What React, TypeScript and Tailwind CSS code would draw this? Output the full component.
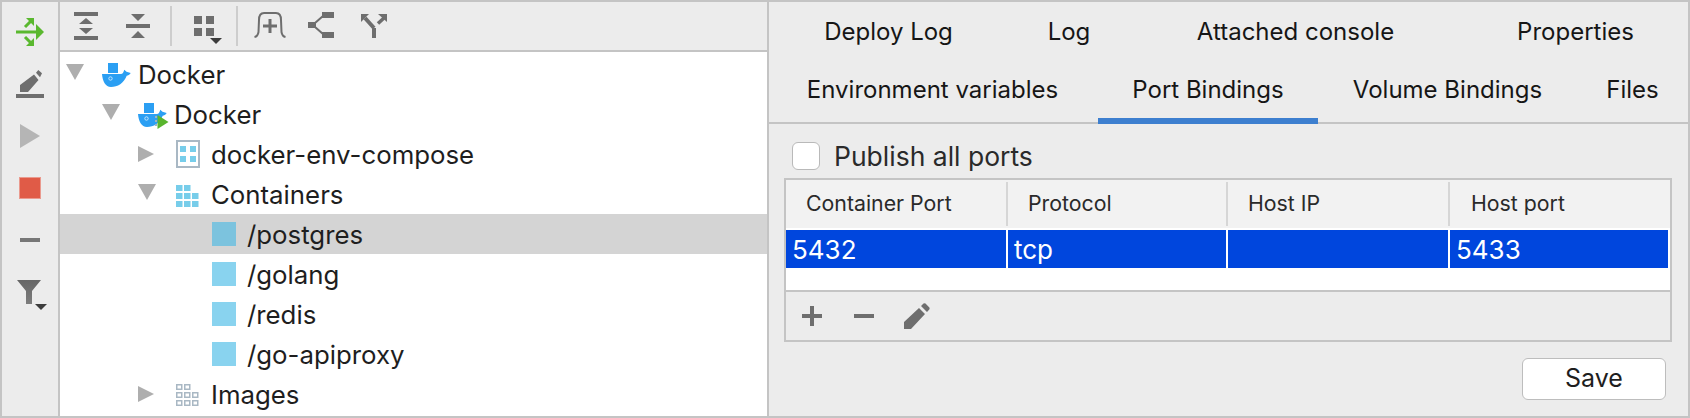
import React from "react";

const gray = "#6e6e6e";

function Whale({ running }: { running?: boolean }) {
  return (
    <svg width="32" height="26" viewBox="0 0 32 26" className="mt-1">
      <rect x="6" y="0" width="10" height="10" fill="#2b9ff3" />
      <path
        d="M0 11 H19 C20.5 11 21.5 9.5 22.3 6.7 L24.5 8.7 L28.7 10 C27.5 11.8 26 12.6 24.7 12.7 C22 20 15.5 24 9 24 C3.5 24 0.5 18 0 11 Z"
        fill="#2b9ff3"
      />
      <circle cx="8.5" cy="15.5" r="1.7" fill="none" stroke="#cfe9fc" strokeWidth="0.9" />
      {running && (
        <>
          <path d="M17 13 h2 v2 h-2 Z M17 17 h2 v2 h-2 Z M17 21 h2 v2 h-2 Z" fill="#9db4c4" />
          <path d="M19.5 12 L30.5 19 L19.5 26 Z" fill="#59b52e" />
        </>
      )}
    </svg>
  );
}

function Arrow({ open }: { open?: boolean }) {
  if (open) {
    return (
      <svg width="18" height="16" viewBox="0 0 18 16" className="-mt-1">
        <path d="M0 0 H18 L9 16 Z" fill="#aeaeae" />
      </svg>
    );
  }
  return (
    <svg width="16" height="16" viewBox="0 0 16 16">
      <path d="M0 0 L16 8 L0 16 Z" fill="#aeaeae" />
    </svg>
  );
}

function ComposeIcon() {
  return (
    <svg width="26" height="28" viewBox="0 0 26 28" className="ml-[2px]">
      <rect x="1" y="1" width="22" height="26" fill="none" stroke="#a9b8c4" strokeWidth="2" />
      <rect x="4" y="6" width="6" height="6" fill="#77cdea" />
      <rect x="14" y="6" width="6" height="6" fill="#77cdea" />
      <rect x="4" y="16" width="6" height="6" fill="#77cdea" />
      <rect x="14" y="16" width="6" height="6" fill="#77cdea" />
    </svg>
  );
}

const gridCells = [
  [0, 0],
  [8, 0],
  [0, 8],
  [8, 8],
  [16, 8],
  [0, 16],
  [8, 16],
  [16, 16],
];

function ContainersIcon() {
  return (
    <svg width="24" height="22" viewBox="0 0 24 22" className="ml-[2px] mt-1">
      {gridCells.map(([x, y]) => (
        <rect key={`${x}-${y}`} x={x} y={y} width="6.5" height="6" fill="#77cdea" />
      ))}
    </svg>
  );
}

function ImagesIcon() {
  return (
    <svg width="24" height="22" viewBox="0 0 24 22" className="ml-[2px] mt-[2px]">
      {gridCells.map(([x, y]) => (
        <rect key={`${x}-${y}`} x={x + 0.75} y={y + 0.75} width="5" height="4.5" fill="none" stroke="#a9b8c4" strokeWidth="1.5" />
      ))}
    </svg>
  );
}

function Square({ selected }: { selected?: boolean }) {
  return <div className={selected ? "w-6 h-6 ml-[2px] bg-[#7cc3de]" : "w-6 h-6 ml-[2px] bg-[#89d3ef]"} />;
}

function TreeRow({
  indent,
  arrow,
  icon,
  label,
  selected,
  slot = "w-[37px]",
}: {
  indent: string;
  arrow?: React.ReactNode;
  icon: React.ReactNode;
  label: string;
  selected?: boolean;
  slot?: string;
}) {
  return (
    <div className={`flex items-center h-10 ${indent} ${selected ? "bg-[#d4d4d4]" : ""}`}>
      <div className="w-9 flex items-center">{arrow}</div>
      <div className={`${slot} flex items-center`}>{icon}</div>
      <span className="text-[25.8px] text-[#1e1e1e] leading-none mt-[2px]">{label}</span>
    </div>
  );
}

function SideToolbar() {
  return (
    <div className="w-[58px] shrink-0 border-r-2 border-[#c4c4c4] pt-1 flex flex-col items-center">
      <div className="h-[52px] flex items-center">
        <svg width="28" height="28" viewBox="0 0 28 28">
          <rect x="0" y="12.5" width="21" height="3" fill="#5ab82f" />
          <path d="M20 6 L28 14 L20 22 Z" fill="#5ab82f" />
          <path d="M10 0 H18 V8 Z M10 28 H18 V20 Z" fill="#5ab82f" />
          <path d="M9 9 L14.5 3.5 M9 19 L14.5 24.5" fill="none" stroke="#5ab82f" strokeWidth="3" />
        </svg>
      </div>
      <div className="h-[52px] flex items-center">
        <svg width="28" height="28" viewBox="0 0 28 28">
          <rect x="0" y="24" width="28" height="4" fill={gray} />
          <path d="M4 22 V15 L18 4.5 L22.5 10 L12 22 Z M20 2.7 L22.3 0 L26 3.3 L24 7.3 Z" fill={gray} />
        </svg>
      </div>
      <div className="h-[52px] flex items-center">
        <svg width="20" height="24" viewBox="0 0 20 24">
          <path d="M0 0 L20 12 L0 24 Z" fill="#b5b5b5" />
        </svg>
      </div>
      <div className="h-[52px] flex items-center">
        <div className="w-[22px] h-[22px] bg-[#e05b47] border border-[#ea9a8e]" />
      </div>
      <div className="h-[52px] flex items-center">
        <div className="w-5 h-1 bg-[#777777]" />
      </div>
      <div className="h-[52px] flex items-start pt-[14px]">
        <svg width="32" height="30" viewBox="0 0 32 30" className="ml-[6px]">
          <defs>
            <linearGradient id="funnel" x1="0" y1="0" x2="0" y2="1">
              <stop offset="0" stopColor="#666666" />
              <stop offset="1" stopColor="#7d7d7d" />
            </linearGradient>
          </defs>
          <path d="M0 0 H24 L15 11 V24 H9 V11 Z" fill="url(#funnel)" />
          <path d="M18 24 H30 L24 30 Z" fill="#3c3c3c" />
        </svg>
      </div>
    </div>
  );
}

function TopToolbar() {
  return (
    <div className="h-[50px] border-b-2 border-[#c4c4c4] flex items-center shrink-0">
      <svg width="24" height="28" viewBox="0 0 24 28" className="ml-[14px]">
        <rect width="24" height="4" fill={gray} />
        <rect y="24" width="24" height="4" fill={gray} />
        <path d="M12 6 L19 12 H5 Z M5 16 H19 L12 22 Z" fill={gray} />
      </svg>
      <svg width="24" height="24" viewBox="0 0 24 24" className="ml-7">
        <rect y="10" width="24" height="4" fill={gray} />
        <path d="M5 0 H19 L12 7 Z M12 17 L19 24 H5 Z" fill={gray} />
      </svg>
      <div className="w-[2px] h-10 bg-[#cdcdcd] ml-5" />
      <svg width="28" height="28" viewBox="0 0 28 28" className="ml-[22px] overflow-visible">
        <rect y="4" width="8" height="8" fill={gray} />
        <rect x="12" y="4" width="8" height="8" fill={gray} />
        <rect y="16" width="8" height="8" fill={gray} />
        <rect x="12" y="16" width="8" height="8" fill={gray} />
        <path d="M16 26 H28 L22 32 Z" fill="#3c3c3c" />
      </svg>
      <div className="w-[2px] h-10 bg-[#cdcdcd] ml-[14px]" />
      <svg width="32" height="28" viewBox="0 0 32 28" className="ml-4">
        <path
          d="M0.5 25 C3 24.5 4 23 4.5 20 L5 8 C5 3 6.5 1 10 1 H22 C25.5 1 27 3 27 8 L27.5 20 C28 23 29 24.5 31.5 25"
          fill="none"
          stroke={gray}
          strokeWidth="2"
        />
        <path d="M9 14 H23 M16 7 V21" stroke={gray} strokeWidth="3" />
      </svg>
      <svg width="26" height="28" viewBox="0 0 26 28" className="ml-[22px]">
        <rect x="14" y="0" width="12" height="6" fill={gray} />
        <rect x="14" y="20" width="12" height="6" fill={gray} />
        <rect x="0" y="10" width="8" height="6" fill={gray} />
        <path d="M7 11 L15 4 M7 15 L15 22" stroke={gray} strokeWidth="2" />
      </svg>
      <svg width="28" height="28" viewBox="0 0 28 28" className="ml-[26px]">
        <rect x="12" y="16" width="4" height="10" fill={gray} />
        <path d="M5 6 L14 16" fill="none" stroke={gray} strokeWidth="4" />
        <path d="M18 11.5 L24 6" fill="none" stroke={gray} strokeWidth="3.5" />
        <path d="M1 2 H9 L1 10 Z M27 2 H18 L27 10 Z" fill={gray} />
      </svg>
    </div>
  );
}

function Tabs() {
  const tab = "flex items-center justify-center h-[56px] text-[24px] text-[#161616] whitespace-nowrap";
  return (
    <div className="shrink-0">
      <div className="flex h-[60px]">
        <div className={`${tab} h-[60px] w-[241px] pr-[2px]`}>Deploy Log</div>
        <div className={`${tab} h-[60px] w-[118px]`}>Log</div>
        <div className={`${tab} h-[60px] w-[335px]`}>Attached console</div>
        <div className={`${tab} h-[60px] w-[225px]`}>Properties</div>
      </div>
      <div className="flex h-[60px] border-b-2 border-[#c4c4c4] box-content items-start">
        <div className={`${tab} w-[329px] pr-[2px]`}>Environment variables</div>
        <div className={`${tab} w-[220px] h-[62px] border-b-[6px] border-[#3d7fcf]`}>Port Bindings</div>
        <div className={`${tab} w-[259px]`}>Volume Bindings</div>
        <div className={`${tab} w-[111px]`}>Files</div>
      </div>
    </div>
  );
}

function PortTable() {
  const head = "h-[48px] flex items-center text-[21.3px] text-[#2a2a2a]";
  const divider = "w-[2px] h-[44px] bg-[#d6d6d6]";
  const cell = "h-[38px] flex items-center pl-[6px] text-[26px] text-white bg-[#0046dd]";
  return (
    <div className="ml-[15px] w-[888px] border-2 border-[#c4c4c4] bg-white">
      <div className="flex items-center h-[48px] bg-[#f2f2f2]">
        <div className={`${head} w-[220px] pl-5`}>Container Port</div>
        <div className={divider} />
        <div className={`${head} w-[218px] pl-5`}>Protocol</div>
        <div className={divider} />
        <div className={`${head} w-[220px] pl-5`}>Host IP</div>
        <div className={divider} />
        <div className={`${head} w-[220px] pl-[21px]`}>Host port</div>
      </div>
      <div className="h-[2px]" />
      <div className="flex h-[38px] gap-[2px]">
        <div className={`${cell} w-[220px]`}>
          <span>5432</span>
        </div>
        <div className={`${cell} w-[218px] pl-[5px]`}>
          <span>tcp</span>
        </div>
        <div className={`${cell} w-[220px]`}></div>
        <div className={`${cell} w-[218px]`}>
          <span>5433</span>
        </div>
      </div>
      <div className="h-[22px]" />
      <div className="h-[50px] border-t-2 border-[#c4c4c4] bg-[#ececec] flex items-center pl-4">
        <svg width="20" height="20" viewBox="0 0 20 20">
          <path d="M0 10 H20 M10 0 V20" stroke={gray} strokeWidth="4" />
        </svg>
        <svg width="20" height="20" viewBox="0 0 20 20" className="ml-8">
          <path d="M0 10 H20" stroke={gray} strokeWidth="4" />
        </svg>
        <svg width="26" height="26" viewBox="0 0 26 26" className="ml-[30px]">
          <path d="M0 26 V19 L15 5 L21 11 L7 26 Z M17 3 L19.5 0.6 Q20.5 0 21.5 0.6 L25.4 4.4 Q26 5.4 25.3 6.4 L23 9 Z" fill={gray} />
        </svg>
      </div>
    </div>
  );
}

export default function App() {
  return (
    <div
      className="w-[1690px] h-[418px] border-2 border-[#c4c4c4] bg-[#ececec] flex overflow-hidden"
      style={{ fontFamily: "Inter, 'Noto Sans', sans-serif" }}
    >
      <SideToolbar />
      <div className="w-[709px] shrink-0 border-r-2 border-[#c4c4c4] flex flex-col">
        <TopToolbar />
        <div className="flex-1 bg-white pt-[2px]">
          <TreeRow indent="pl-[6px]" slot="w-[36px]" arrow={<Arrow open />} icon={<Whale />} label="Docker" />
          <TreeRow indent="pl-[42px]" slot="w-[36px]" arrow={<Arrow open />} icon={<Whale running />} label="Docker" />
          <TreeRow indent="pl-[78px]" arrow={<Arrow />} icon={<ComposeIcon />} label="docker-env-compose" />
          <TreeRow indent="pl-[78px]" arrow={<Arrow open />} icon={<ContainersIcon />} label="Containers" />
          <TreeRow indent="pl-[114px]" icon={<Square selected />} label="/postgres" selected />
          <TreeRow indent="pl-[114px]" icon={<Square />} label="/golang" />
          <TreeRow indent="pl-[114px]" icon={<Square />} label="/redis" />
          <TreeRow indent="pl-[114px]" icon={<Square />} label="/go-apiproxy" />
          <TreeRow indent="pl-[78px]" arrow={<Arrow />} icon={<ImagesIcon />} label="Images" />
        </div>
      </div>
      <div className="flex-1 flex flex-col">
        <Tabs />
        <div className="flex items-center h-[44px] mt-[10px] pl-[23px] gap-[14px]">
          <div className="w-7 h-7 rounded-md bg-white border border-[#b9b9b9]" />
          <span className="text-[26.5px] text-[#2a2a2a] mt-[2px]">Publish all ports</span>
        </div>
        <PortTable />
        <div className="flex justify-end pr-[22px] pt-4">
          <button className="w-[144px] h-[42px] bg-white border border-[#bdbdbd] rounded-md text-[25px] text-[#1e1e1e]">
            Save
          </button>
        </div>
      </div>
    </div>
  );
}
